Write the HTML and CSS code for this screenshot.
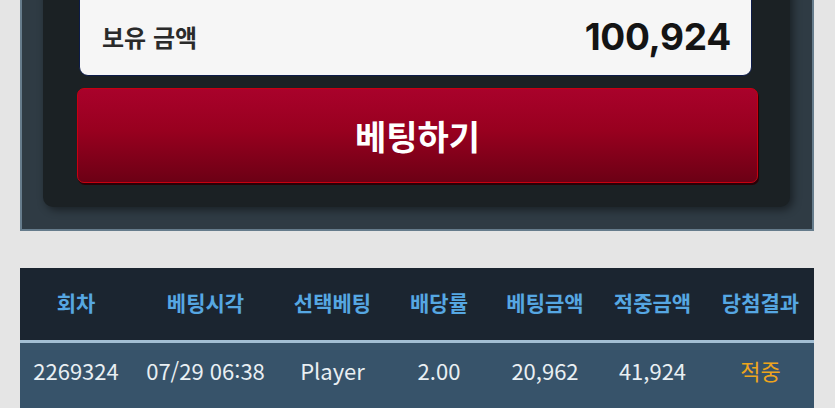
FILE: index.html
```html
<!DOCTYPE html>
<html lang="ko">
<head>
<meta charset="utf-8">
<title>베팅</title>
<link rel="stylesheet" href="styles.css">
</head>
<body>
<div class="panel">
  <div class="card">
    <div class="balance">
      <span class="balance-label">보유 금액</span>
      <span class="balance-value">100,924</span>
    </div>
    <button class="bet-btn">베팅하기</button>
  </div>
</div>

<div class="history">
  <div class="history-head">
    <div class="cell">회차</div>
    <div class="cell">베팅시각</div>
    <div class="cell">선택베팅</div>
    <div class="cell">배당률</div>
    <div class="cell">베팅금액</div>
    <div class="cell">적중금액</div>
    <div class="cell">당첨결과</div>
  </div>
  <div class="history-row">
    <div class="cell">2269324</div>
    <div class="cell">07/29 06:38</div>
    <div class="cell">Player</div>
    <div class="cell">2.00</div>
    <div class="cell">20,962</div>
    <div class="cell">41,924</div>
    <div class="cell win">적중</div>
  </div>
</div>
</body>
</html>
```

FILE: styles.css
```css
* { box-sizing: border-box; }

html, body {
  margin: 0;
  height: 100%;
  overflow: hidden;
}

body {
  background: #e5e5e5;
  padding: 0 21px 0 20px;
  font-family: "Noto Sans CJK KR", "Noto Sans", sans-serif;
}

.panel {
  margin-top: -40px;
  background: #2f3b44;
  border: 2px solid #667c8c;
  padding: 8px 22px 22px 21px;
}

.card {
  background: #1b2124;
  border-radius: 10px;
  box-shadow: 3px 3px 8px rgba(0, 0, 0, 0.45);
  padding: 20px 32px 24px 34px;
  display: flex;
  flex-direction: column;
}

.balance {
  height: 86px;
  margin: 0 6px 0 2px;
  background: #f6f6f6;
  border: 1px solid #0c1b4a;
  border-radius: 9px;
  display: flex;
  align-items: center;
  justify-content: space-between;
  padding: 6px 20px 0 22px;
}

.balance-label {
  font-size: 24px;
  font-weight: 700;
  color: #2a2a2a;
}

.balance-value {
  font-family: Inter, "Liberation Sans", sans-serif;
  font-size: 37px;
  font-weight: 700;
  color: #141414;
  letter-spacing: -0.3px;
}

.bet-btn {
  margin-top: 12px;
  height: 95px;
  border: 1px solid #c8000f;
  border-radius: 7px;
  background: linear-gradient(to bottom, #a9022b 0%, #98001f 45%, #6c0015 100%);
  box-shadow: 1px 2px 0 #2a0007;
  color: #ffffff;
  font-family: "Noto Sans CJK KR", sans-serif;
  font-size: 34px;
  font-weight: 700;
  display: flex;
  align-items: center;
  justify-content: center;
  padding: 0;
}

.history {
  margin-top: 37px;
}

.history-head,
.history-row {
  display: grid;
  grid-template-columns: 112px 147px 107px 106px 106px 109px 1fr;
  align-items: start;
}

.history-head {
  height: 75px;
  background: #1b2530;
  border-bottom: 3px solid #a2bed3;
  align-items: center;
}

.history-head .cell {
  text-align: center;
  color: #56a7e2;
  font-size: 21px;
  font-weight: 700;
  padding-bottom: 4px;
}

.history-row {
  height: 80px;
  background: #37536a;
  padding-top: 11px;
}

.history-row .cell {
  text-align: center;
  color: #e9eff3;
  font-size: 22px;
  font-weight: 400;
}

.history-row .cell.win {
  color: #eea51c;
}
```
